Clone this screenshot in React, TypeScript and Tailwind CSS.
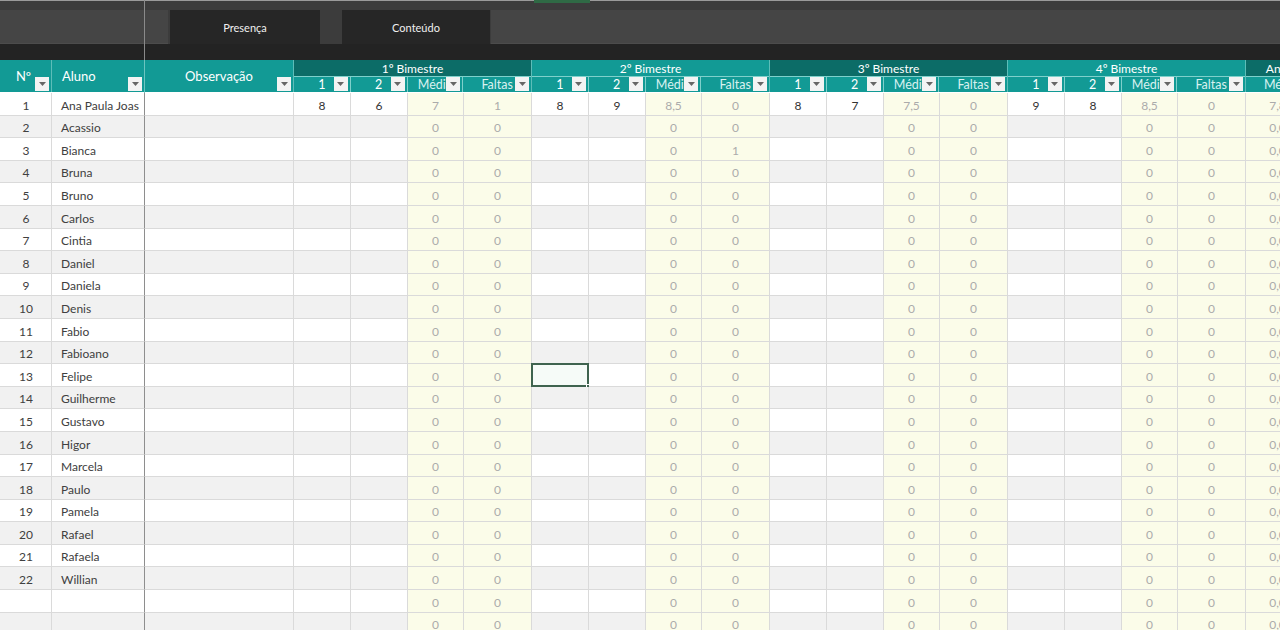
import React from "react";

const names = [
  "Ana Paula Joas", "Acassio", "Bianca", "Bruna", "Bruno", "Carlos", "Cintia", "Daniel",
  "Daniela", "Denis", "Fabio", "Fabioano", "Felipe", "Guilherme", "Gustavo", "Higor",
  "Marcela", "Paulo", "Pamela", "Rafael", "Rafaela", "Willian",
];

const subCols = [
  { w: "w-[57px]", label: "1", calc: false },
  { w: "w-[57px]", label: "2", calc: false },
  { w: "w-[56px]", label: "Média", calc: true },
  { w: "w-[68px]", label: "Faltas", calc: true },
];

const groups = [
  { title: "1º Bimestre", titleBg: "bg-[#0c6c67]", first: ["8", "6", "7", "1"] },
  { title: "2º Bimestre", titleBg: "bg-[#129a95]", first: ["8", "9", "8,5", "0"] },
  { title: "3º Bimestre", titleBg: "bg-[#0c6c67]", first: ["8", "7", "7,5", "0"] },
  { title: "4º Bimestre", titleBg: "bg-[#129a95]", first: ["9", "8", "8,5", "0"] },
];

const ROWS = 25;

function Drop() {
  return (
    <span className="absolute right-[2px] bottom-[1px] w-[14px] h-[14px] bg-[#f3f3f3] flex items-center justify-center">
      <svg width="7" height="4" viewBox="0 0 7 4">
        <path d="M0 0h7L3.5 4z" fill="#666" />
      </svg>
    </span>
  );
}

function TopBar() {
  return (
    <div className="h-[60px] bg-[#232323] flex flex-col">
      <div className="h-[44px] bg-[#3c3c3c] border-t border-[#9a9a9a] flex flex-col justify-end relative">
        <div className="absolute left-[534px] top-[-1px] w-[56px] h-[3px] bg-[#2f6a45]" />
        <div className="flex h-[34px]">
          <div className="w-[168px] bg-[#454545] border-b border-[#4c4c4c]" />
          <div className="w-[2px]" />
          <div className="w-[150px] bg-[#262626] flex items-center justify-center pt-[3px] text-[11px] text-[#f0f0f0]">
            Presença
          </div>
          <div className="w-[22px]" />
          <div className="w-[148px] bg-[#262626] flex items-center justify-center pt-[3px] text-[11px] text-[#f0f0f0]">
            Conteúdo
          </div>
          <div className="flex-1 bg-[#454545] border-b border-[#4c4c4c] ml-px" />
        </div>
      </div>
    </div>
  );
}

function Header() {
  return (
    <div className="flex h-[33px] bg-[#129a95] text-white border-b border-white">
      <div className="w-[52px] relative flex items-center justify-center pr-[4px] pt-[1px] text-[13px] border-r border-[#5dbdb8]">
        Nº
        <Drop />
      </div>
      <div className="w-[93px] relative flex items-center pl-[10px] pt-[1px] text-[13px] border-r border-[#5dbdb8]">
        Aluno
        <Drop />
      </div>
      <div className="w-[149px] relative flex items-center justify-center pt-[1px] text-[13px] border-r border-[#5dbdb8]">
        Observação
        <Drop />
      </div>
      {groups.map((g) => (
        <div key={g.title} className="flex flex-col w-[238px] border-r border-[#5dbdb8]">
          <div className={`h-[17px] ${g.titleBg} flex items-center justify-center pt-[1px] text-[12px] leading-none border-b border-[#7fd0cb]`}>
            {g.title}
          </div>
          <div className="flex flex-1 bg-[#129a95]">
            {subCols.map((c, i) => (
              <div
                key={i}
                className={`${c.w} relative flex items-center justify-center pt-[1px] text-[12.5px] leading-none overflow-hidden ${c.calc ? "text-[#d9f1f0]" : "text-white"} ${i < 3 ? "border-r border-[#7fd0cb]" : ""}`}
              >
                {c.label}
                <Drop />
              </div>
            ))}
          </div>
        </div>
      ))}
      <div className="flex flex-col w-[70px]">
        <div className="h-[17px] bg-[#0c6c67] flex items-center justify-center pt-[1px] text-[12px] leading-none border-b border-[#7fd0cb]">
          Anual
        </div>
        <div className="flex-1 flex items-center justify-center pt-[1px] text-[12.5px] leading-none text-[#d9f1f0]">
          Média
        </div>
      </div>
    </div>
  );
}

function Row({ idx }: { idx: number }) {
  const odd = idx % 2 === 1;
  const base = odd ? "bg-[#f1f1f1]" : "bg-white";
  const name = names[idx];
  return (
    <div className="flex h-[22.6px] text-[12px] leading-[12px]">
      <div className={`w-[52px] ${base} border-r border-b border-[#dadada] flex items-end justify-center pb-[3px] pl-[1px] text-[#404040]`}>
        {name ? idx + 1 : ""}
      </div>
      <div className={`w-[93px] ${base} border-r border-b border-[#8e8e8e] border-b-[#dadada] flex items-end pl-[9px] pb-[3px] text-[#404040] whitespace-nowrap overflow-hidden`}>
        {name || ""}
      </div>
      <div className={`w-[149px] ${base} border-r border-b border-[#dadada]`} />
      {groups.map((g, gi) => (
        <div key={gi} className="flex w-[238px]">
          {subCols.map((c, i) => {
            let val = "";
            if (c.calc) val = "0";
            if (idx === 0) val = g.first[i];
            if (idx === 2 && gi === 1 && i === 3) val = "1";
            const selected = idx === 12 && gi === 1 && i === 0;
            return (
              <div
                key={i}
                className={`${c.w} relative border-r border-b border-[#dadada] flex items-end justify-center pb-[3px] ${c.calc ? "bg-[#fbfce9] text-[#ababab]" : `${base} text-[#333]`}`}
              >
                {val}
                {selected && (
                  <>
                    <div className="absolute inset-[-1px] border-2 border-[#3f634f] bg-[#f6fbf8]" />
                    <div className="absolute right-[-3px] bottom-[-3px] w-[5px] h-[5px] bg-[#3f634f] border border-white" />
                  </>
                )}
              </div>
            );
          })}
        </div>
      ))}
      <div className="w-[70px] bg-[#fbfce9] border-b border-[#dadada] flex items-end justify-center pb-[3px] text-[#ababab]">
        {idx === 0 ? "7,88" : "0,00"}
      </div>
    </div>
  );
}

export default function App() {
  return (
    <div
      className="w-[1280px] h-[630px] overflow-hidden relative bg-white"
      style={{ fontFamily: "Lato, 'Open Sans', sans-serif" }}
    >
      <TopBar />
      <div className="w-[1400px]">
        <Header />
        {Array.from({ length: ROWS }).map((_, i) => (
          <Row key={i} idx={i} />
        ))}
      </div>
      <div className="absolute left-[144px] top-0 w-px h-[60px] bg-[#8a8a8a]" />
      <div className="absolute left-[144px] top-[60px] w-px h-[33px] bg-[#6cc5c0]" />
    </div>
  );
}
